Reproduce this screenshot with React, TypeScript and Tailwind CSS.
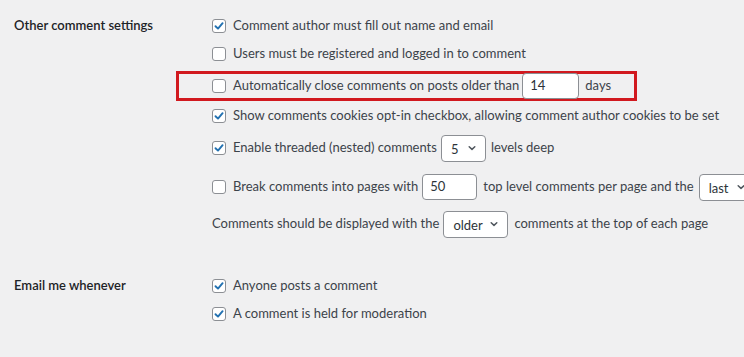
import React from 'react';

const Checkbox: React.FC<{ checked?: boolean }> = ({ checked = false }) => (
  <span className="inline-flex items-center justify-center w-[14px] h-[14px] shrink-0 rounded-[3px] border border-[#8c8f94] bg-white mr-[7px]">
    {checked && (
      <svg width="12" height="12" viewBox="0 0 12 12" fill="none">
        <path d="M2.5 6.2 L5 8.6 L9.6 3.2" stroke="#2271b1" strokeWidth="1.9" strokeLinecap="round" strokeLinejoin="round" />
      </svg>
    )}
  </span>
);

const Chevron: React.FC = () => (
  <svg width="10" height="10" viewBox="0 0 10 10" fill="none">
    <path d="M2.2 3.8 L5 6.4 L7.8 3.8" stroke="#50575e" strokeWidth="1.5" strokeLinecap="round" strokeLinejoin="round" />
  </svg>
);

const TextBox: React.FC<{ value: string; width: string }> = ({ value, width }) => (
  <span className={`relative z-10 inline-flex items-center h-[26px] ${width} rounded-[4px] border border-[#8c8f94] bg-white pl-[7px] text-[#2c3338]`}>
    {value}
  </span>
);

const SelectBox: React.FC<{ value: string; width: string }> = ({ value, width }) => (
  <span className={`inline-flex items-center justify-between h-[27px] ${width} shrink-0 rounded-[4px] border border-[#8c8f94] bg-white pl-[9px] pr-[8px] text-[#2c3338]`}>
    <span className="pt-[3px]">{value}</span>
    <Chevron />
  </span>
);

const Row: React.FC<{ className?: string; children: React.ReactNode }> = ({ className = '', children }) => (
  <div className={`flex items-center whitespace-nowrap ${className}`}>{children}</div>
);

export default function App() {
  return (
    <div className="w-[744px] h-[357px] overflow-hidden bg-[#f0f0f1] text-[13px] text-[#3c434a] font-['Lato',sans-serif]">
      <div className="flex pl-[14px] pt-[12px]">
        <div className="w-[198px] shrink-0 h-[28px] flex items-center font-semibold text-[#1d2327]">
          Other comment settings
        </div>
        <div className="flex flex-col">
          <Row className="h-[28px]">
            <Checkbox checked />
            Comment author must fill out name and email
          </Row>
          <Row className="h-[28px]">
            <Checkbox />
            Users must be registered and logged in to comment
          </Row>
          <Row className="h-[30px] mt-[3px] relative">
            <div className="absolute left-[-36px] top-0 w-[461px] h-[30px] border-[3px] border-[#d1191f]" />
            <Checkbox />
            Automatically close comments on posts older than
            <span className="ml-[3px] mr-[6px] inline-flex"><TextBox value="14" width="w-[57px]" /></span>
            days
          </Row>
          <Row className="h-[28px] mt-[1px]">
            <Checkbox checked />
            Show comments cookies opt-in checkbox, allowing comment author cookies to be set
          </Row>
          <Row className="h-[30px] mt-[3px]">
            <Checkbox checked />
            Enable threaded (nested) comments
            <span className="ml-[4px] mr-[5px] inline-flex"><SelectBox value="5" width="w-[45px]" /></span>
            levels deep
          </Row>
          <Row className="h-[30px] mt-[9px]">
            <Checkbox />
            Break comments into pages with
            <span className="ml-[4px] mr-[6px] inline-flex"><TextBox value="50" width="w-[55px]" /></span>
            top level comments per page and the
            <span className="ml-[5px] inline-flex"><SelectBox value="last" width="w-[56px]" /></span>
          </Row>
          <Row className="h-[30px] mt-[7px]">
            Comments should be displayed with the
            <span className="ml-[4px] mr-[6px] inline-flex"><SelectBox value="older" width="w-[65px]" /></span>
            comments at the top of each page
          </Row>
        </div>
      </div>

      <div className="flex pl-[14px] mt-[33px]">
        <div className="w-[198px] shrink-0 h-[28px] flex items-center font-semibold text-[#1d2327]">
          Email me whenever
        </div>
        <div className="flex flex-col">
          <Row className="h-[28px]">
            <Checkbox checked />
            Anyone posts a comment
          </Row>
          <Row className="h-[28px]">
            <Checkbox checked />
            A comment is held for moderation
          </Row>
        </div>
      </div>
    </div>
  );
}
